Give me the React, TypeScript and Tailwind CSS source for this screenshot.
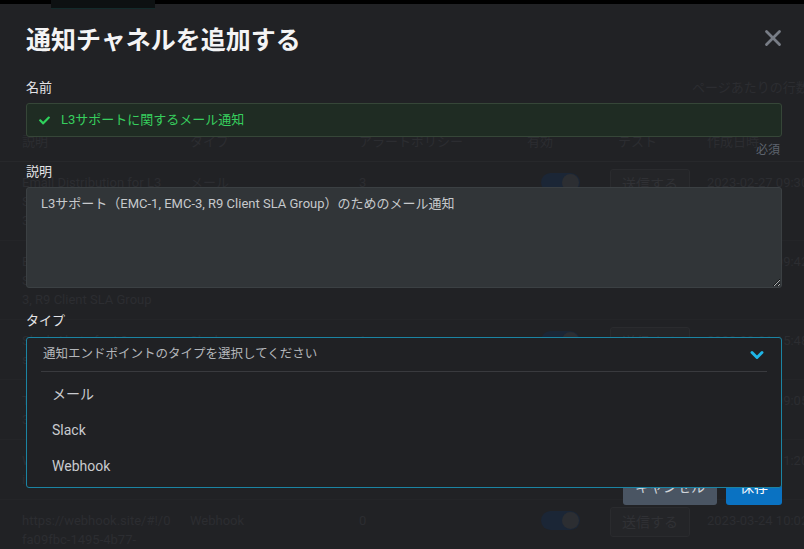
import { FaCheck } from 'react-icons/fa'
import { ChevronDown, X } from 'lucide-react'

// Rows of the channel list that sits behind the modal
const ROWS = [
  {
    desc: ['Email Distribution for L3', 'Support (EMC-1, EMC-', '3, R9 Client SLA Group'],
    type: 'メール',
    alerts: '3',
    date: '2023-02-27 09:30',
  },
  {
    desc: ['Email Notification for L3', 'Support (EMC-1, EMC-', '3, R9 Client SLA Group'],
    type: 'メール',
    alerts: '2',
    date: '2023-02-27 09:42',
  },
  { desc: ['Slack Alerts for L3', 'support channel'], type: 'Slack', alerts: '1', date: '2023-03-01 15:48' },
  { desc: ['Team Escalation for', '3rd line support'], type: 'メール', alerts: '4', date: '2023-03-10 09:05' },
  { desc: ['Webhook test for', 'incident sync'], type: 'Webhook', alerts: '1', date: '2023-03-15 11:20' },
  { desc: ['https://webhook.site/#!/0', 'fa09fbc-1495-4b77-'], type: 'Webhook', alerts: '0', date: '2023-03-24 10:02' },
]

const OPTIONS = ['メール', 'Slack', 'Webhook']

function BackgroundPage() {
  return (
    <div className="text-[13px] leading-[19px] text-[#2c2d31]">
      {/* top bar */}
      <div className="h-[9px] bg-[linear-gradient(to_bottom,#000_4px,transparent_4px)] pl-[51px]">
        <div className="h-full w-[104px] border-b border-[#132b2b] bg-[#0d1112]" />
      </div>

      <div className="mt-[69px] whitespace-nowrap pl-[692px]">ページあたりの行数</div>

      <div className="mt-[35px] grid grid-cols-[168px_169px_168px_91px_89px_1fr] border-b border-[#27282b] pb-[10px] pl-[22px] whitespace-nowrap">
        <span>説明</span>
        <span>タイプ</span>
        <span>アラートポリシー</span>
        <span>有効</span>
        <span>テスト</span>
        <span>作成日時</span>
      </div>

      {ROWS.map((row, i) => (
        <div
          key={i}
          className="grid grid-cols-[168px_169px_168px_91px_89px_1fr] border-b border-[#242528] pt-[11px] pb-[10px] pl-[22px] whitespace-nowrap"
        >
          <div>
            {row.desc.map(line => (
              <div key={line}>{line}</div>
            ))}
          </div>
          <span>{row.type}</span>
          <span>{row.alerts}</span>
          <div className="pl-[14px]">
            <div className="flex h-[19px] w-[39px] items-center justify-end rounded-full bg-[#1b2636] px-[1px]">
              <div className="h-[17px] w-[17px] rounded-full bg-[#2c2e32]" />
            </div>
          </div>
          <div className="-ml-[8px] -mt-[4px]">
            <div className="flex h-[30px] w-[80px] items-center justify-center rounded-[3px] border border-[#2a2b2e] bg-[#242528] text-[14px] text-[#303135]">
              送信する
            </div>
          </div>
          <span>{row.date}</span>
        </div>
      ))}
    </div>
  )
}

export default function App() {
  return (
    <div className="relative h-[549px] w-[804px] overflow-hidden bg-[#212225] font-['Roboto','Noto_Sans_CJK_JP',sans-serif]">
      <BackgroundPage />

      {/* Modal */}
      <div className="absolute inset-0 pl-[26px] pr-[22px] pt-[22px]">
        <div className="flex items-start justify-between">
          <h2 className="text-[25px] font-bold leading-[38px] text-[#f4f4f5]">通知チャネルを追加する</h2>
          <button className="-mr-[4px] mt-[3px] text-[#787d86]">
            <X size={26} strokeWidth={2.6} />
          </button>
        </div>

        {/* Name */}
        <label className="mt-[18px] block text-[13px] leading-[20px] text-[#e4e4e7]">名前</label>
        <div className="mt-[5px] flex h-[34px] items-center gap-[11px] rounded-[3px] border border-[#364638] bg-[#1f2c23] pl-[12px]">
          <FaCheck size={11} className="text-[#2fd35c]" />
          <span className="text-[13px] text-[#37cf5e]">L3サポートに関するメール通知</span>
        </div>
        <div className="mt-[4px] pr-[2px] text-right text-[12px] leading-[18px] text-[#5e646e]">必須</div>

        {/* Description */}
        <label className="mt-[3px] block text-[13px] leading-[20px] text-[#e4e4e7]">説明</label>
        <textarea
          readOnly
          value="L3サポート（EMC-1, EMC-3, R9 Client SLA Group）のためのメール通知"
          className="mt-[5px] block h-[101px] w-full resize-y rounded-[3px] border border-[#3b4043] bg-[#313538] px-[14px] pt-[6px] text-[13px] leading-[20px] text-[#c6c9cc] outline-none"
        />

        {/* Type */}
        <label className="mt-[23px] block text-[13px] leading-[20px] text-[#e4e4e7]">タイプ</label>
        <div className="relative mt-[6px] h-[34px]">
          <div className="absolute inset-x-0 top-0 z-10 rounded-[3px] border border-[#1b84a3] bg-[#202124] pb-[3px]">
            <div className="flex h-[33px] items-center justify-between pl-[16px] pr-[14px]">
              <span className="text-[12.5px] text-[#b3b6ba]">通知エンドポイントのタイプを選択してください</span>
              <ChevronDown size={20} strokeWidth={3.5} className="text-[#1fb5e6]" />
            </div>
            <div className="mx-[14px] h-px bg-[#393a3e]" />
            <ul className="pt-[4px]">
              {OPTIONS.map(opt => (
                <li key={opt} className="flex h-9 items-center pl-[25px] text-[14px] text-[#c9cbcf]">
                  {opt}
                </li>
              ))}
            </ul>
          </div>
        </div>

        {/* Footer buttons (covered by the open menu) */}
        <div className="mt-[98px] flex justify-end gap-[9px]">
          <button className="h-[36px] w-[94px] rounded-[3px] bg-[#4a5563] text-[14px] text-[#d0d4da]">キャンセル</button>
          <button className="h-[36px] w-[56px] rounded-[3px] bg-[#0a72c2] text-[14px] text-white">保存</button>
        </div>
      </div>
    </div>
  )
}
